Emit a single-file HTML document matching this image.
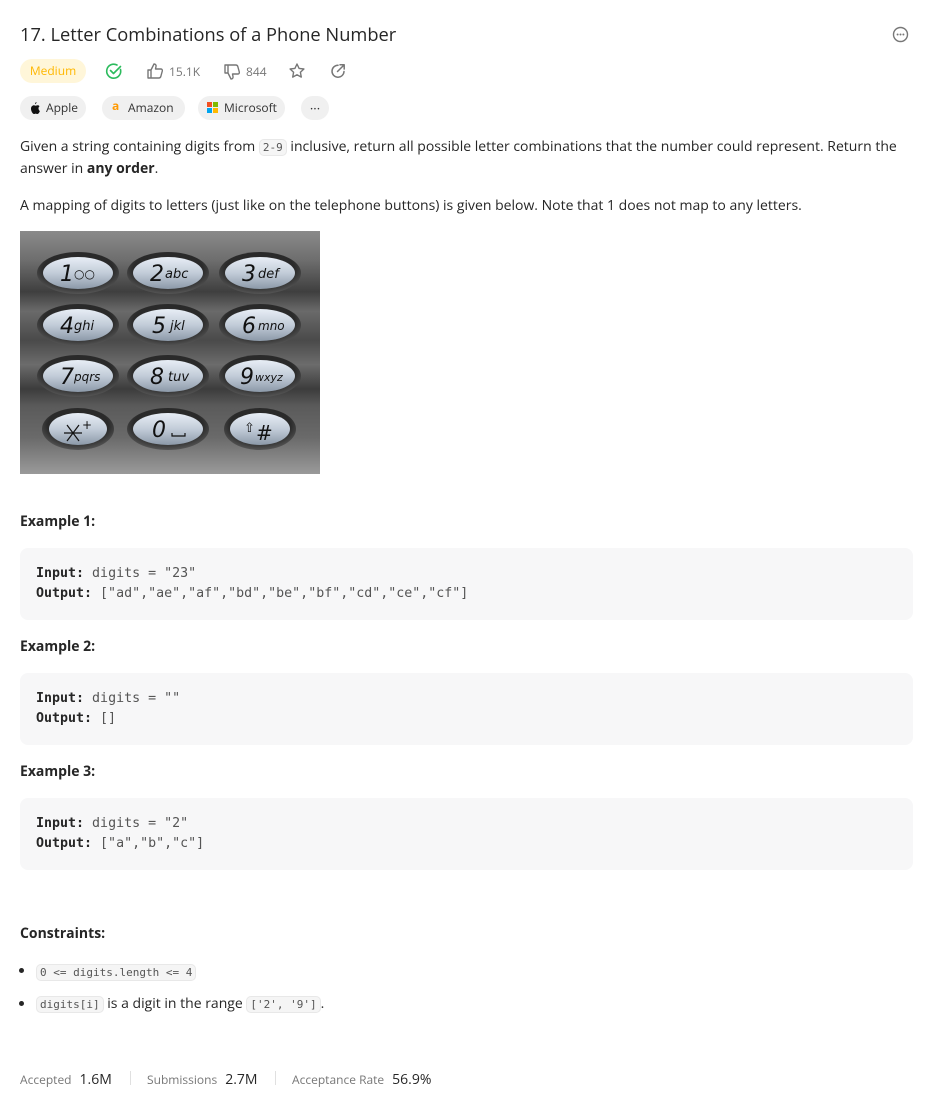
<!DOCTYPE html>
<html><head><meta charset="utf-8"><style>
body{margin:0;background:#fff;font-family:"Open Sans","Liberation Sans",sans-serif;color:#262626;width:933px;height:1102px;overflow:hidden;position:relative}
.a{position:absolute}
.pill{position:absolute;height:24px;border-radius:12px;background:#f0f0f0;font-size:12px;color:#333;line-height:24px;padding:0 10px;box-sizing:border-box;white-space:nowrap}
p{margin:0}
.txt{font-size:14px;line-height:21px;color:#262626}
code{font-family:"DejaVu Sans Mono","Liberation Mono",monospace;font-size:11px;background:#f5f5f5;border:1px solid #e8e8e8;border-radius:5px;padding:1px 3px;color:#555}
.ex{position:absolute;left:20px;width:893px;height:72px;background:#f7f7f8;border-radius:8px;font-family:"DejaVu Sans Mono","Liberation Mono",monospace;font-size:13.3px;line-height:20px;color:#555;padding:16px 16px;box-sizing:border-box}
.ex b{color:#262626}
.h{position:absolute;left:20px;font-size:14px;font-weight:bold;color:#262626}
.st{position:absolute;top:1070px;font-size:12px;color:#777}
.sv{font-size:14px;color:#262626;margin-left:8px}
.bul{position:absolute;left:19px;width:5px;height:5px;border-radius:50%;background:#262626}
</style></head><body>
<div class="a" style="left:20px;top:22px;font-size:18.3px;color:#262626">17. Letter Combinations of a Phone Number</div>
<svg class="a" style="left:892px;top:26px" width="17" height="17" viewBox="0 0 17 17"><circle cx="8.5" cy="8.5" r="7" fill="none" stroke="#777" stroke-width="1.4"/><circle cx="5.6" cy="8.5" r="1" fill="#777"/><circle cx="8.5" cy="8.5" r="1" fill="#777"/><circle cx="11.4" cy="8.5" r="1" fill="#777"/></svg>

<div class="pill" style="left:20px;top:59px;width:66px;background:#fff6d9;color:#ffb700;text-align:center;padding:0">Medium</div>
<svg class="a" style="left:105px;top:62px" width="18" height="18" viewBox="0 0 18 18"><path d="M15.5 7.5A7 7 0 1 1 12 3" fill="none" stroke="#2cbb5d" stroke-width="1.6" stroke-linecap="round"/><path d="M5.5 8.5l3 3 7-7" fill="none" stroke="#2cbb5d" stroke-width="1.6" stroke-linecap="round" stroke-linejoin="round"/></svg>
<svg class="a" style="left:146px;top:62px" width="18" height="18" viewBox="0 0 18 18"><path d="M2 8h3v8H2zM5 8l3-6c1.5 0 2.3 1 2 2.5L9.5 7H15c1 0 1.5 1 1.3 2l-1.5 5.5c-.3 1-1 1.5-2 1.5H5" fill="none" stroke="#777" stroke-width="1.4" stroke-linejoin="round"/></svg>
<div class="a" style="left:169px;top:63px;font-size:12px;color:#777">15.1K</div>
<svg class="a" style="left:223px;top:63px" width="18" height="18" viewBox="0 0 18 18"><path d="M2 2h3v8H2zM5 10l3 6c1.5 0 2.3-1 2-2.5L9.5 11H15c1 0 1.5-1 1.3-2l-1.5-5.5c-.3-1-1-1.5-2-1.5H5" fill="none" stroke="#777" stroke-width="1.4" stroke-linejoin="round"/></svg>
<div class="a" style="left:246px;top:63px;font-size:12px;color:#777">844</div>
<svg class="a" style="left:288px;top:62px" width="18" height="18" viewBox="0 0 18 18"><path d="M9 2l2.1 4.4 4.8.6-3.5 3.3.9 4.8L9 12.8 4.7 15.1l.9-4.8L2.1 7l4.8-.6z" fill="none" stroke="#777" stroke-width="1.4" stroke-linejoin="round"/></svg>
<svg class="a" style="left:329px;top:62px" width="18" height="18" viewBox="0 0 18 18"><path d="M15 9.5A6 6 0 1 1 9 3.2" fill="none" stroke="#777" stroke-width="1.5" stroke-linecap="round"/><path d="M8.5 9.5L15 3M11 2.8h4.2V7" fill="none" stroke="#777" stroke-width="1.5" stroke-linecap="round" stroke-linejoin="round"/></svg>

<div class="pill" style="left:20px;top:96px;width:66px;padding-left:26px">Apple</div>
<svg class="a" style="left:28px;top:101px" width="13" height="14" viewBox="0 0 13 14"><path d="M8.5 1c.1 1-.6 2-1.5 2.2C6.9 2.3 7.6 1.2 8.5 1zM10.5 7.3c0-1.3 1-2 1.1-2-.6-.9-1.6-1-1.9-1-.8-.1-1.6.5-2 .5s-1-.5-1.8-.5C4.8 4.3 3 5.3 3 7.8c0 2.3 1.6 5.2 3 5.2.6 0 1-.4 1.7-.4s1 .4 1.7.4c1.2 0 2.2-2 2.5-3-.1 0-1.4-.6-1.4-2.7z" fill="#111"/></svg>
<div class="pill" style="left:102px;top:96px;width:83px;padding-left:26px">Amazon</div>
<div class="a" style="left:112px;top:97px;font-size:12px;font-weight:bold;color:#f90">a</div>
<div class="pill" style="left:198px;top:96px;width:87px;padding-left:26px">Microsoft</div>
<svg class="a" style="left:207px;top:102px" width="11" height="11"><rect width="5" height="5" fill="#f25022"/><rect x="6" width="5" height="5" fill="#7fba00"/><rect y="6" width="5" height="5" fill="#00a4ef"/><rect x="6" y="6" width="5" height="5" fill="#ffb900"/></svg>
<div class="pill" style="left:301px;top:96px;width:28px;padding:0;text-align:center;line-height:24px;font-size:13px">···</div>

<p class="txt a" style="left:20px;top:136px;width:900px">Given a string containing digits from <code>2-9</code> inclusive, return all possible letter combinations that the number could represent. Return the answer in <b>any order</b>.</p>
<p class="txt a" style="left:20px;top:195px;width:900px">A mapping of digits to letters (just like on the telephone buttons) is given below. Note that 1 does not map to any letters.</p>

<svg class="a" style="left:20px;top:231px" width="300" height="243" viewBox="0 0 300 243">
<defs>
<linearGradient id="bg" x1="0" y1="0" x2="0" y2="1">
<stop offset="0" stop-color="#8a8a8a"/><stop offset=".12" stop-color="#6e6e6e"/><stop offset=".25" stop-color="#3f3f3f"/><stop offset=".33" stop-color="#6a6a6a"/><stop offset=".45" stop-color="#4a4a4a"/><stop offset=".55" stop-color="#6c6c6c"/><stop offset=".65" stop-color="#3c3c3c"/><stop offset=".72" stop-color="#5a5a5a"/><stop offset=".85" stop-color="#6a6a6a"/><stop offset="1" stop-color="#9a9a9a"/>
</linearGradient>
<radialGradient id="ring" cx=".5" cy=".4" r=".6"><stop offset=".7" stop-color="#2a2a2a"/><stop offset="1" stop-color="#555"/></radialGradient>
<linearGradient id="btn" x1="0" y1="0" x2="0" y2="1"><stop offset="0" stop-color="#e8eef6"/><stop offset=".5" stop-color="#c2ccd8"/><stop offset="1" stop-color="#8c99a8"/></linearGradient>
</defs>
<rect width="300" height="243" fill="url(#bg)"/>
<g font-family="DejaVu Sans,sans-serif" font-style="italic" fill="#111">
<g transform="translate(58,42)"><ellipse rx="41" ry="21" fill="url(#ring)"/><ellipse rx="35" ry="16" fill="url(#btn)"/><text x="-18" y="8" font-size="22" font-weight="200">1</text><text x="-4" y="5" font-size="12">○○</text></g>
<g transform="translate(148,42)"><ellipse rx="41" ry="21" fill="url(#ring)"/><ellipse rx="35" ry="16" fill="url(#btn)"/><text x="-18" y="8" font-size="22">2</text><text x="-3" y="5" font-size="13">abc</text></g>
<g transform="translate(240,42)"><ellipse rx="41" ry="21" fill="url(#ring)"/><ellipse rx="35" ry="16" fill="url(#btn)"/><text x="-18" y="8" font-size="22">3</text><text x="-2" y="5" font-size="13">def</text></g>
<g transform="translate(58,94)"><ellipse rx="41" ry="21" fill="url(#ring)"/><ellipse rx="35" ry="16" fill="url(#btn)"/><text x="-18" y="8" font-size="22">4</text><text x="-4" y="5" font-size="13">ghi</text></g>
<g transform="translate(148,94)"><ellipse rx="41" ry="21" fill="url(#ring)"/><ellipse rx="35" ry="16" fill="url(#btn)"/><text x="-16" y="8" font-size="22">5</text><text x="2" y="5" font-size="13">jkl</text></g>
<g transform="translate(240,94)"><ellipse rx="41" ry="21" fill="url(#ring)"/><ellipse rx="35" ry="16" fill="url(#btn)"/><text x="-18" y="8" font-size="22">6</text><text x="-2" y="5" font-size="12">mno</text></g>
<g transform="translate(58,145)"><ellipse rx="41" ry="21" fill="url(#ring)"/><ellipse rx="35" ry="16" fill="url(#btn)"/><text x="-18" y="8" font-size="22">7</text><text x="-4" y="5" font-size="12">pqrs</text></g>
<g transform="translate(148,145)"><ellipse rx="41" ry="21" fill="url(#ring)"/><ellipse rx="35" ry="16" fill="url(#btn)"/><text x="-18" y="8" font-size="22">8</text><text x="0" y="5" font-size="13">tuv</text></g>
<g transform="translate(240,145)"><ellipse rx="41" ry="21" fill="url(#ring)"/><ellipse rx="35" ry="16" fill="url(#btn)"/><text x="-20" y="8" font-size="22">9</text><text x="-5" y="5" font-size="11">wxyz</text></g>
<g transform="translate(58,198)"><ellipse rx="36" ry="21" fill="url(#ring)"/><ellipse rx="29" ry="16" fill="url(#btn)"/><path d="M-11 -4L1 12M-11 12L1 -4M-14 4H4" stroke="#111" stroke-width="1.2"/><text x="4" y="0" font-size="12" font-style="normal">+</text></g>
<g transform="translate(148,198)"><ellipse rx="41" ry="21" fill="url(#ring)"/><ellipse rx="35" ry="16" fill="url(#btn)"/><text x="-16" y="8" font-size="22">0</text><path d="M4 4v3h13V4" fill="none" stroke="#111" stroke-width="1.2"/></g>
<g transform="translate(240,198)"><ellipse rx="36" ry="21" fill="url(#ring)"/><ellipse rx="30" ry="16" fill="url(#btn)"/><text x="-16" y="3" font-size="13" font-style="normal">⇧</text><text x="-4" y="11" font-size="20" font-style="normal">#</text></g>
</g>
</svg>

<div class="h" style="top:512px">Example 1:</div>
<div class="ex" style="top:548px"><b>Input:</b> digits = "23"<br><b>Output:</b> ["ad","ae","af","bd","be","bf","cd","ce","cf"]</div>
<div class="h" style="top:637px">Example 2:</div>
<div class="ex" style="top:673px"><b>Input:</b> digits = ""<br><b>Output:</b> []</div>
<div class="h" style="top:762px">Example 3:</div>
<div class="ex" style="top:798px"><b>Input:</b> digits = "2"<br><b>Output:</b> ["a","b","c"]</div>

<div class="h" style="top:924px">Constraints:</div>
<div class="bul" style="top:968px"></div>
<div class="a txt" style="left:36px;top:961px"><code>0 &lt;= digits.length &lt;= 4</code></div>
<div class="bul" style="top:1001px"></div>
<div class="a txt" style="left:36px;top:993px"><code>digits[i]</code> is a digit in the range <code>['2', '9']</code>.</div>

<div class="st" style="left:20px">Accepted<span class="sv">1.6M</span></div>
<div class="a" style="left:130px;top:1071px;width:1px;height:14px;background:#e0e0e0"></div>
<div class="st" style="left:147px">Submissions<span class="sv">2.7M</span></div>
<div class="a" style="left:275px;top:1071px;width:1px;height:14px;background:#e0e0e0"></div>
<div class="st" style="left:292px">Acceptance Rate<span class="sv">56.9%</span></div>
</body></html>
